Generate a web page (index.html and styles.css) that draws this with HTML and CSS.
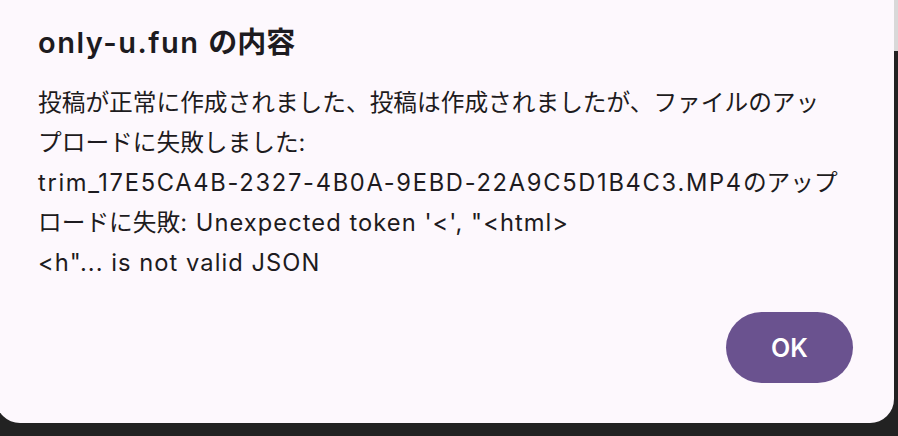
FILE: index.html
```html
<!DOCTYPE html>
<html lang="ja">
<head>
<meta charset="utf-8">
<link rel="stylesheet" href="styles.css">
</head>
<body>
<div class="dialog">
  <h1 class="title"><span class="latin">only-u.fun </span>の内容</h1>
  <p class="message">投稿が正常に作成されました、投稿は作成されましたが、ファイルのアッ<br>プロードに失敗しました<span class="latin">:</span><br><span class="filename">trim_17E5CA4B-2327-4B0A-9EBD-22A9C5D1B4C3.MP4</span>のアップ<br>ロードに失敗<span class="latin">: Unexpected token '&lt;', "&lt;html&gt;</span><br><span class="latin">&lt;h"... is not valid JSON</span></p>
  <div class="actions">
    <button class="ok">OK</button>
  </div>
</div>
</body>
</html>
```
FILE: styles.css
```css
html, body {
  margin: 0;
  padding: 0;
  height: 100%;
  overflow: hidden;
}
body {
  background: linear-gradient(#d9d9d9, #d9d9d9) no-repeat right top / 4px 51px, #222222;
  font-family: "Inter", "Noto Sans CJK JP", sans-serif;
  color: #1d1b20;
}
.dialog {
  box-sizing: border-box;
  margin-left: -4px;
  width: 898px;
  height: 423px;
  background: #fdf8fd;
  border-radius: 0 0 24px 24px;
  padding: 27px 41px 40px 42px;
  display: flex;
  flex-direction: column;
}
.title {
  margin: 0;
  font-size: 29px;
  line-height: 32px;
  font-weight: 600;
}
.title .latin {
  letter-spacing: 1.5px;
}
.message {
  margin: 24px 0 0;
  font-size: 23.7px;
  line-height: 40px;
  white-space: nowrap;
}
.message .latin {
  letter-spacing: 1.05px;
}
.message .filename {
  letter-spacing: 1.7px;
}
.actions {
  margin-top: auto;
  display: flex;
  justify-content: flex-end;
}
.ok {
  width: 127px;
  height: 71px;
  border: none;
  border-radius: 36px;
  background: #6a528f;
  color: #ffffff;
  font-family: "Inter", sans-serif;
  font-size: 25px;
  font-weight: 600;
  padding: 0;
}
```
